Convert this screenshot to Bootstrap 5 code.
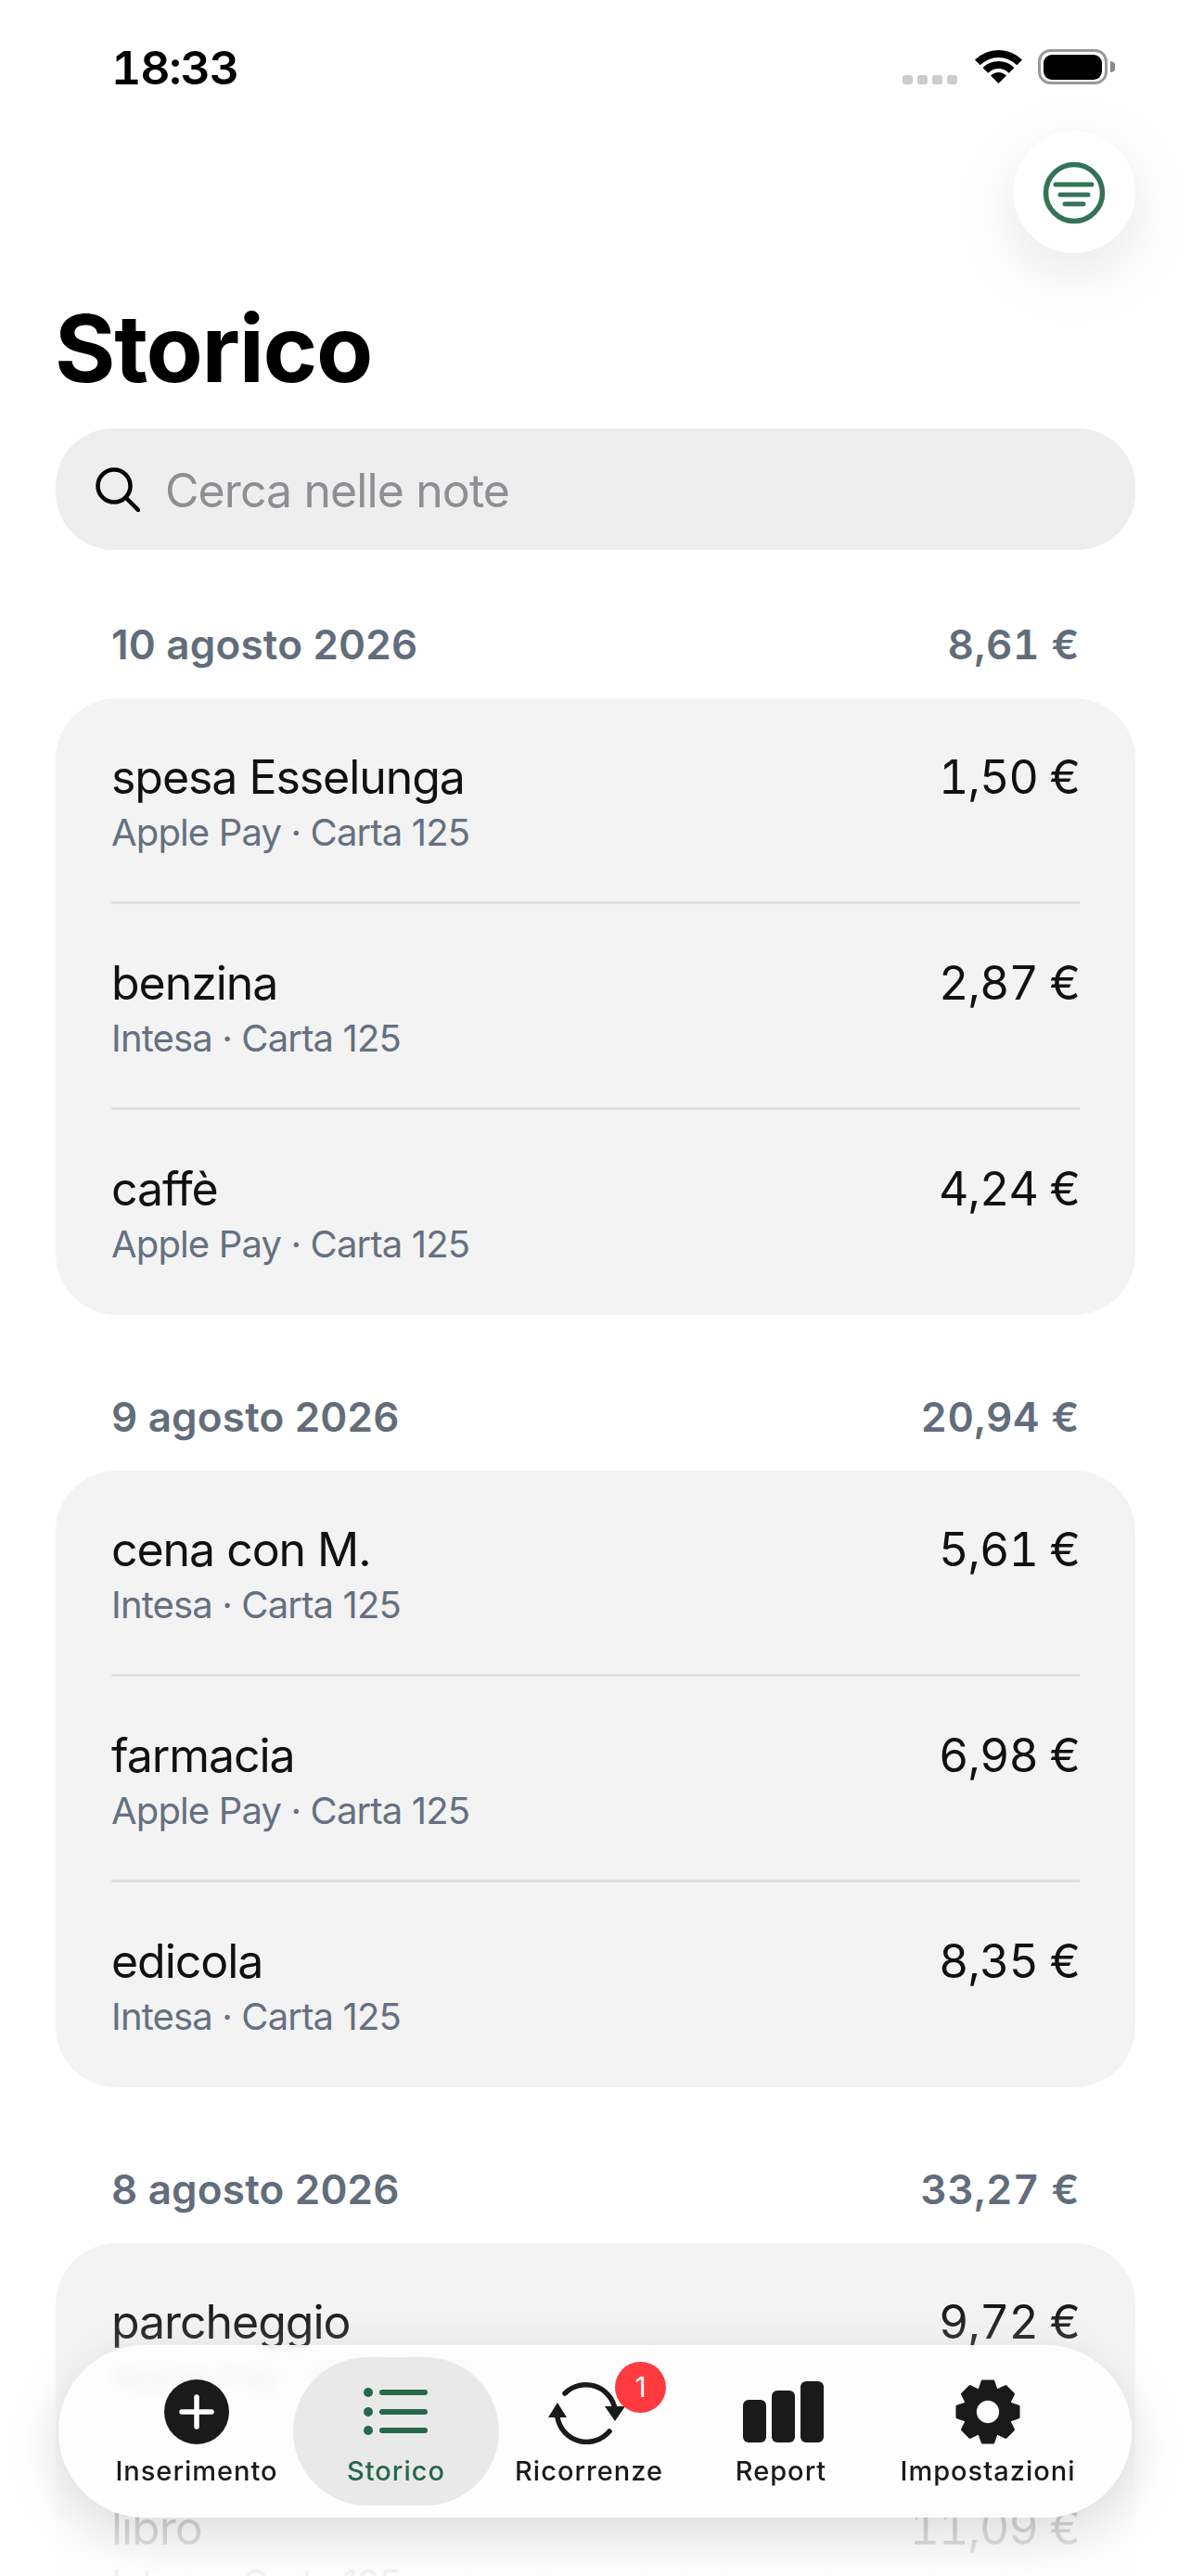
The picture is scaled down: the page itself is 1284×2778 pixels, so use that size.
<!DOCTYPE html>
<html lang="it">
<head>
    <meta charset="UTF-8">
    <meta name="viewport" content="width=device-width, initial-scale=1.0">
    <title>Storico</title>
    <link href="https://cdn.jsdelivr.net/npm/bootstrap@5.3.0/dist/css/bootstrap.min.css" rel="stylesheet">
    <style>
        body {
            width: 1284px;
            height: 2778px;
            overflow: hidden;
            background-color: #ffffff;
            color: #111111;
            font-family: "Inter", "Liberation Sans", sans-serif;
        }
        .schermo { padding: 0 60px; }

        /* Barra di stato */
        .barra-stato { height: 141px; padding: 0 22px 0 60px; }
        .ora { font-size: 50px; line-height: 60px; font-weight: 600; color: #000; margin-top: 43px; font-variant-numeric: tabular-nums; letter-spacing: -1.2px; }
        .stato-icone { margin-top: 53px; gap: 19px; }
        .punti { gap: 5px; margin-top: 28px; }
        .punti span { width: 11px; height: 10px; border-radius: 3px; background-color: #cccccc; }
        .batteria { margin-left: -2px; }

        /* Filtro */
        .filtro {
            width: 132px;
            height: 132px;
            background-color: #ffffff;
            box-shadow: 0 20px 70px rgba(0, 0, 0, .1);
        }
        h1.titolo { font-size: 100px; line-height: 120px; font-weight: 700; color: #000; margin: 43px 0 26px -1px; letter-spacing: -1.3px; }

        /* Ricerca */
        .ricerca { height: 131px; background-color: #eeeeef; border-radius: 62px; padding-left: 43px; gap: 27px; margin-bottom: 77px; }
        .ricerca span { font-size: 50px; line-height: 60px; margin-top: 3px; color: #8e8e93; letter-spacing: -.9px; }

        /* Lista */
        .giorno { height: 50px; line-height: 50px; padding: 0 60px; margin-bottom: 33px; font-size: 44px; font-weight: 600; color: #626d7c; letter-spacing: .2px; }
        .giorno span + span { letter-spacing: .6px; font-variant-numeric: tabular-nums; }
        .riquadro { background-color: #f3f3f4; border-radius: 66px; padding: 0 60px; margin-bottom: 85px; }
        .voce { padding: 55px 0 50px 0; border-bottom: 3px solid #dfdfe2; }
        .voce:last-child { border-bottom: 0; padding-bottom: 52px; }
        .voce-titolo { font-size: 50px; line-height: 60px; color: #111111; letter-spacing: -1.05px; }
        .voce-importo { font-size: 50px; line-height: 60px; color: #111111; font-variant-numeric: tabular-nums; letter-spacing: -.9px; }
        .voce-sub { font-size: 40px; line-height: 48px; margin-top: 6px; color: #667080; letter-spacing: -.85px; }

        /* Sfumatura in basso */
        .sfumatura {
            position: absolute;
            left: 0;
            right: 0;
            bottom: 0;
            height: 300px;
            background: linear-gradient(to bottom, rgba(255,255,255,0), rgba(255,255,255,.82) 80%, rgba(255,255,255,.92));
        }

        /* Tab bar */
        .tab-bar {
            position: absolute;
            left: 63px;
            top: 2529px;
            width: 1157px;
            height: 186px;
            border-radius: 93px;
            padding: 13px 0 0 45px;
            display: grid;
            grid-template-columns: 208px 222px 194px 220px 226px;
            background-color: rgba(254, 254, 254, .86);
            backdrop-filter: blur(8px);
            box-shadow: 0 16px 60px rgba(0, 0, 0, .14);
        }
        .tab {
            position: relative;
            height: 160px;
            border-radius: 80px;
            padding-top: 24px;
            color: #1a1a1a;
            font-size: 29px;
            line-height: 36px;
            font-weight: 500;
            letter-spacing: 1px;
            text-align: center;
        }
        .tab svg { display: block; margin: 0 auto 11px auto; }
        .tab svg.ingranaggio { margin: -1px auto 10px auto; }
        .tab-attivo { background-color: #e9e9ea; color: #27684b; }
        .avviso {
            position: absolute;
            left: 125px;
            top: 5px;
            width: 55px;
            height: 55px;
            background-color: #ff3b40;
            color: #ffffff;
            font-size: 30px;
            font-weight: 400;
            letter-spacing: 0;
            line-height: 55px;
        }
    </style>
</head>
<body class="position-relative">
    <div class="schermo">
        <!-- Barra di stato -->
        <div class="barra-stato d-flex justify-content-between align-items-start">
            <div class="ora">18:33</div>
            <div class="stato-icone d-flex align-items-start">
                <div class="punti d-flex"><span></span><span></span><span></span><span></span></div>
                <svg width="51" height="37" viewBox="0 0 51 37"><path d="M0 11.5A36 36 0 0 1 51 11.5L45.3 17.2A28 28 0 0 0 5.7 17.2Z"/><path d="M8.5 20A24 24 0 0 1 42.5 20L36.8 25.7A16 16 0 0 0 14.2 25.7Z"/><path d="M17 28.5A12 12 0 0 1 34 28.5L25.500 37Z"/></svg>
                <svg class="batteria" width="83" height="38" viewBox="0 0 83 38"><rect x="1.500" y="1.500" width="72" height="35" rx="12" fill="none" stroke="#999999" stroke-width="3"/><rect x="6" y="6" width="63" height="27" rx="9"/><path d="M78 13A6 6 0 0 1 78 25Z" fill="#888888"/></svg>
            </div>
        </div>

        <!-- Filtro -->
        <div class="d-flex justify-content-end">
            <button type="button" class="filtro btn rounded-circle border-0 p-0 d-flex align-items-center justify-content-center" aria-label="Filtra">
                <svg width="70" height="70" viewBox="0 0 70 70" fill="none" stroke="#347356" stroke-linecap="round"><circle cx="35" cy="36" r="30.500" stroke-width="5.500"/><path d="M15 27H54M20 38H50M25 48H45" stroke-width="5"/></svg>
            </button>
        </div>

        <h1 class="titolo">Storico</h1>

        <!-- Ricerca -->
        <div class="ricerca d-flex align-items-center">
            <svg width="48" height="48" viewBox="0 0 48 48" fill="none" stroke="#000" stroke-width="4.500" stroke-linecap="round"><circle cx="20" cy="20" r="17.500"/><path d="M33 33L46 46"/></svg>
            <span>Cerca nelle note</span>
        </div>

        <!-- 10 agosto -->
        <div class="giorno d-flex justify-content-between"><span>10 agosto 2026</span><span>8,61 €</span></div>
        <div class="riquadro">
            <div class="voce d-flex justify-content-between">
                <div><div class="voce-titolo">spesa Esselunga</div><div class="voce-sub">Apple Pay · Carta 125</div></div>
                <div class="voce-importo">1,50 €</div>
            </div>
            <div class="voce d-flex justify-content-between">
                <div><div class="voce-titolo">benzina</div><div class="voce-sub">Intesa · Carta 125</div></div>
                <div class="voce-importo">2,87 €</div>
            </div>
            <div class="voce d-flex justify-content-between">
                <div><div class="voce-titolo">caffè</div><div class="voce-sub">Apple Pay · Carta 125</div></div>
                <div class="voce-importo">4,24 €</div>
            </div>
        </div>

        <!-- 9 agosto -->
        <div class="giorno d-flex justify-content-between"><span>9 agosto 2026</span><span>20,94 €</span></div>
        <div class="riquadro">
            <div class="voce d-flex justify-content-between">
                <div><div class="voce-titolo">cena con M.</div><div class="voce-sub">Intesa · Carta 125</div></div>
                <div class="voce-importo">5,61 €</div>
            </div>
            <div class="voce d-flex justify-content-between">
                <div><div class="voce-titolo">farmacia</div><div class="voce-sub">Apple Pay · Carta 125</div></div>
                <div class="voce-importo">6,98 €</div>
            </div>
            <div class="voce d-flex justify-content-between">
                <div><div class="voce-titolo">edicola</div><div class="voce-sub">Intesa · Carta 125</div></div>
                <div class="voce-importo">8,35 €</div>
            </div>
        </div>

        <!-- 8 agosto -->
        <div class="giorno d-flex justify-content-between"><span>8 agosto 2026</span><span>33,27 €</span></div>
        <div class="riquadro">
            <div class="voce d-flex justify-content-between">
                <div><div class="voce-titolo">parcheggio</div><div class="voce-sub">Apple Pay · Carta 125</div></div>
                <div class="voce-importo">9,72 €</div>
            </div>
            <div class="voce d-flex justify-content-between">
                <div><div class="voce-titolo">libro</div><div class="voce-sub">Intesa · Carta 125</div></div>
                <div class="voce-importo">11,09 €</div>
            </div>
        </div>
    </div>

    <div class="sfumatura"></div>

    <!-- Tab bar -->
    <nav class="tab-bar">
        <div class="tab">
            <svg width="70" height="70" viewBox="0 0 70 70"><circle cx="35" cy="35" r="35" fill="#1a1a1a"/><path d="M35 19V51M19 35H51" stroke="#fff" stroke-width="5.500" stroke-linecap="round"/></svg>
            Inserimento
        </div>
        <div class="tab tab-attivo">
            <svg width="70" height="70" viewBox="0 0 70 70" fill="#27684b"><circle cx="5" cy="14" r="5"/><circle cx="5" cy="35" r="5"/><circle cx="5" cy="55" r="5"/><rect x="17" y="11" width="52" height="6" rx="3"/><rect x="17" y="32" width="52" height="6" rx="3"/><rect x="17" y="52" width="52" height="6" rx="3"/></svg>
            Storico
        </div>
        <div class="tab">
            <svg width="90" height="70" viewBox="0 0 90 70" fill="none" stroke="#1a1a1a" stroke-width="5.500" stroke-linecap="round"><path d="M19 15A32 32 0 0 1 73 32"/><path d="M67 56A32 32 0 0 1 11 41"/><path d="M62 29H84L73 45Z" fill="#1a1a1a" stroke="none"/><path d="M1 41H21L11 25Z" fill="#1a1a1a" stroke="none"/></svg>
            Ricorrenze
            <span class="avviso badge rounded-circle p-0">1</span>
        </div>
        <div class="tab">
            <svg width="92" height="70" viewBox="0 0 92 70" fill="#1a1a1a"><rect x="5" y="22" width="25" height="46" rx="6"/><rect x="36" y="12" width="25" height="56" rx="6"/><rect x="67" y="2" width="25" height="66" rx="6"/></svg>
            Report
        </div>
        <div class="tab">
            <svg class="ingranaggio" width="72" height="72" viewBox="-37 -37 74 74" fill="#1a1a1a"><circle r="20" fill="none" stroke="#1a1a1a" stroke-width="15"/><path id="dente" d="M-9 -25L-6 -34H6L9 -25Z" stroke="#1a1a1a" stroke-width="3" stroke-linejoin="round"/><use href="#dente" transform="rotate(45)"/><use href="#dente" transform="rotate(90)"/><use href="#dente" transform="rotate(135)"/><use href="#dente" transform="rotate(180)"/><use href="#dente" transform="rotate(225)"/><use href="#dente" transform="rotate(270)"/><use href="#dente" transform="rotate(315)"/></svg>
            Impostazioni
        </div>
    </nav>

    <script src="https://cdn.jsdelivr.net/npm/bootstrap@5.3.0/dist/js/bootstrap.bundle.min.js"></script>
</body>
</html>
